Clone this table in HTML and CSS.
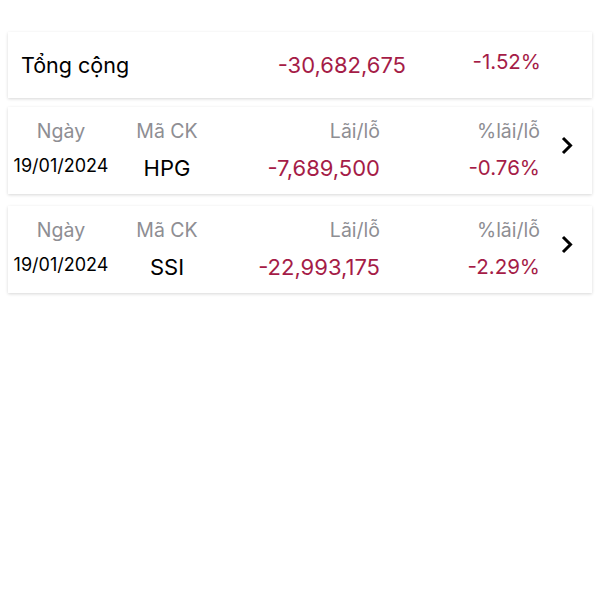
FILE: index.html
```html
<!DOCTYPE html>
<html lang="vi">
<head>
<meta charset="utf-8">
<link rel="stylesheet" href="styles.css">
</head>
<body>
<div class="list">
  <div class="card total">
    <div class="total-label">Tổng cộng</div>
    <div class="total-value red">-30,682,675</div>
    <div class="total-pct red">-1.52%</div>
  </div>

  <div class="card item">
    <div class="h c1">Ngày</div>
    <div class="h c2">Mã CK</div>
    <div class="h c3">Lãi/lỗ</div>
    <div class="h c4">%lãi/lỗ</div>
    <div class="chev">
      <svg width="12" height="19" viewBox="0 0 12 19"><path d="M2 2 L9.5 9.5 L2 17" fill="none" stroke="#000" stroke-width="3"/></svg>
    </div>
    <div class="date c1">19/01/2024</div>
    <div class="code c2">HPG</div>
    <div class="val c3 red">-7,689,500</div>
    <div class="pct c4 red">-0.76%</div>
  </div>

  <div class="card item">
    <div class="h c1">Ngày</div>
    <div class="h c2">Mã CK</div>
    <div class="h c3">Lãi/lỗ</div>
    <div class="h c4">%lãi/lỗ</div>
    <div class="chev">
      <svg width="12" height="19" viewBox="0 0 12 19"><path d="M2 2 L9.5 9.5 L2 17" fill="none" stroke="#000" stroke-width="3"/></svg>
    </div>
    <div class="date c1">19/01/2024</div>
    <div class="code c2">SSI</div>
    <div class="val c3 red">-22,993,175</div>
    <div class="pct c4 red">-2.29%</div>
  </div>
</div>
</body>
</html>
```
FILE: styles.css
```css
html, body {
  margin: 0;
  padding: 0;
  background: #fff;
}
body {
  font-family: Inter, "Liberation Sans", sans-serif;
  color: #000;
  width: 600px;
  height: 600px;
}
.list {
  padding: 32px 8px 0;
  display: flex;
  flex-direction: column;
  gap: 9px;
}
.card {
  background: #fff;
  box-shadow: 0 1px 3px rgba(0, 0, 0, 0.16);
}
.red { color: #a51c47; }

.total {
  height: 66px;
  display: grid;
  grid-template-columns: 200px 198px 135px 1fr;
  align-items: center;
}
.total-label {
  padding-left: 13px;
  font-size: 21.5px;
}
.total-value {
  text-align: right;
  font-size: 22px;
}
.total-pct {
  text-align: right;
  font-size: 20.5px;
  padding-bottom: 8px;
}

.item {
  display: grid;
  grid-template-columns: 106px 106px 160px 160px 1fr;
  grid-template-rows: 24px 26px;
  row-gap: 12px;
  padding: 12px 0 13px;
}
.item + .item { margin-top: 3px; }
.c1, .c2 { text-align: center; }
.c3, .c4 { text-align: right; }
.h {
  font-size: 19.5px;
  line-height: 24px;
  color: #8e8e93;
}
.date {
  font-size: 18px;
  line-height: 22px;
  align-self: start;
}
.code, .val, .pct {
  font-size: 22px;
  line-height: 26px;
}
.pct { font-size: 20.5px; }
.chev {
  grid-column: 5;
  grid-row: 1 / 3;
  align-self: center;
  padding-left: 21px;
  margin-bottom: 10px;
  height: 19px;
}
.chev svg { display: block; }
```
